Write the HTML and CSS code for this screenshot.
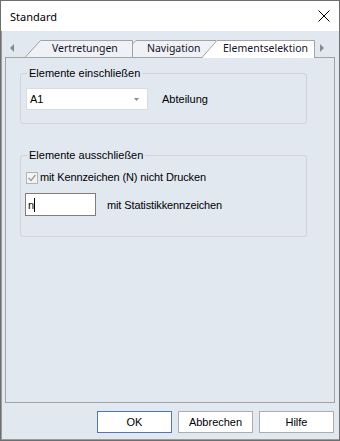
FILE: index.html
```html
<!DOCTYPE html>
<html lang="de">
<head>
<meta charset="utf-8">
<title>Standard</title>
<link rel="stylesheet" href="styles.css">
</head>
<body>
<div class="window">
  <div class="titlebar">
    <span class="title">Standard</span>
    <svg class="close" width="12" height="12" viewBox="0 0 12 12"><path d="M0.5 0.5 L11.5 11.5 M11.5 0.5 L0.5 11.5" stroke="#000" stroke-width="1" fill="none"/></svg>
  </div>
  <div class="client">
    <div class="tabstrip">
      <svg class="tabshapes" width="330" height="28" viewBox="0 0 330 28">
        <g transform="translate(-5,-31)">
          <polygon points="14,44 10,48 14,52" fill="#8a8a8a"/>
          <polygon points="320,44 324,48 320,52" fill="#8a8a8a"/>
          <polygon points="25,57.5 40.5,40.5 132.5,40.5 132.5,57.5" fill="#eef1f5" stroke="#a3a3a3" stroke-width="1"/>
          <polygon points="132.5,57.5 132.5,44 136,40.5 216,40.5 216,57.5" fill="#eef1f5" stroke="#a3a3a3" stroke-width="1"/>
          <polygon points="202,58 217,40 315,40 315,58" fill="#ffffff"/>
          <polyline points="202,57.5 217,40.5 314.5,40.5 314.5,58" fill="none" stroke="#a3a3a3" stroke-width="1"/>
        </g>
      </svg>
      <div class="tablabels">
        <span class="tab t1">Vertretungen</span>
        <span class="tab t2">Navigation</span>
        <span class="tab t3">Elementselektion</span>
      </div>
    </div>
    <div class="panel">
      <fieldset class="group g1">
        <legend>Elemente einschließen</legend>
        <div class="inner row">
          <div class="combo"><span>A1</span><svg width="5" height="3" viewBox="0 0 5 3"><polygon points="0,0 5,0 2.5,3" fill="#8a8a8a"/></svg></div>
          <span>Abteilung</span>
        </div>
      </fieldset>
      <fieldset class="group g2">
        <legend>Elemente ausschließen</legend>
        <div class="inner">
          <label class="check">
            <span class="box"><svg width="10" height="10" viewBox="0 0 10 10"><polyline points="1.5,5 4,7.5 8.5,2" fill="none" stroke="#9c9c9c" stroke-width="1.3"/></svg></span>
            <span class="tight">mit Kennzeichen (N) nicht Drucken</span>
          </label>
          <div class="row row2">
            <div class="textbox"><span>n</span><span class="caret"></span></div>
            <span class="tight">mit Statistikkennzeichen</span>
          </div>
        </div>
      </fieldset>
    </div>
    <div class="buttons">
      <button class="btn default">OK</button>
      <button class="btn">Abbrechen</button>
      <button class="btn">Hilfe</button>
    </div>
  </div>
</div>
</body>
</html>
```
FILE: styles.css
```css
html, body {
  margin: 0;
  padding: 0;
}
body {
  width: 340px;
  height: 441px;
  overflow: hidden;
}
.window {
  width: 340px;
  height: 441px;
  box-sizing: border-box;
  border: 1px solid #6e6e6e;
  box-shadow: inset 1px -1px 0 #9a9a9a;
  background: #e1e8f0;
  display: flex;
  flex-direction: column;
  font-family: "Liberation Sans", Arial, sans-serif;
  font-size: 11px;
  color: #000;
}
.titlebar {
  height: 30px;
  flex: none;
  background: #fff;
  display: flex;
  align-items: center;
  justify-content: space-between;
  padding: 0 9px 0 9px;
  font-family: "Noto Sans", sans-serif;
  font-size: 11px;
  color: #000;
}
.close {
  display: block;
}
.client {
  flex: 1;
  display: flex;
  flex-direction: column;
  padding: 0 4px;
}
.tabstrip {
  height: 26px;
  flex: none;
  position: relative;
  z-index: 1;
}
.tabshapes {
  position: absolute;
  left: 0;
  top: 0;
  overflow: visible;
}
.tablabels {
  position: relative;
  display: flex;
  padding: 10px 0 0 47px;
  font-family: "Noto Sans", sans-serif;
  font-size: 10.5px;
  line-height: 15px;
  color: #14142a;
}
.t1 { width: 95px; }
.t2 { width: 76px; }
.panel {
  height: 346px;
  flex: none;
  box-sizing: border-box;
  border: 1px solid #a3a3a3;
  padding-left: 14px;
}
.group {
  margin: 0;
  padding: 0;
  width: 287px;
  box-sizing: border-box;
  border: 1px solid #d0d4d9;
  border-radius: 3px;
  min-width: 0;
}
.group legend {
  margin-left: 6px;
  padding: 0 2px;
  font-size: 11px;
  line-height: 13px;
}
.g1 { margin-top: 9px; }
.g2 { margin-top: 25px; }
.row {
  display: flex;
  align-items: center;
}
.g1 .inner {
  padding: 8px 0 13px 5px;
  gap: 14px;
}
.combo {
  width: 122px;
  height: 22px;
  box-sizing: border-box;
  border: 1px solid #d8dce1;
  background: #fff;
  display: flex;
  align-items: center;
  justify-content: space-between;
  padding: 0 8px 0 3px;
}
.combo svg { display: block; }
.g2 .inner {
  padding: 9px 0 20px 5px;
}
.check {
  display: flex;
  align-items: center;
  gap: 2px;
  height: 13px;
  line-height: 13px;
}
.tight {
  letter-spacing: -0.12px;
}
.box {
  width: 12px;
  height: 12px;
  box-sizing: border-box;
  border: 1px solid #b4b4b4;
  background: #f3f3f3;
  display: flex;
  align-items: center;
  justify-content: center;
}
.box svg { display: block; }
.row2 {
  margin-top: 9px;
  gap: 11px;
}
.textbox {
  width: 71px;
  height: 23px;
  box-sizing: border-box;
  margin-left: -1px;
  border: 1px solid #7d7d7d;
  background: #fff;
  padding-left: 2px;
  display: flex;
  align-items: center;
}
.caret {
  width: 1px;
  height: 14px;
  background: #000;
}
.buttons {
  display: flex;
  justify-content: flex-end;
  gap: 6px;
  margin-top: 8px;
  padding-right: 1px;
}
.btn {
  width: 75px;
  height: 22px;
  box-sizing: border-box;
  margin: 0;
  padding: 0;
  border: 1px solid #adadad;
  background: #fff;
  font-family: "Liberation Sans", Arial, sans-serif;
  font-size: 11px;
  color: #000;
}
.btn.default {
  border-color: #4f76b3;
}
```
